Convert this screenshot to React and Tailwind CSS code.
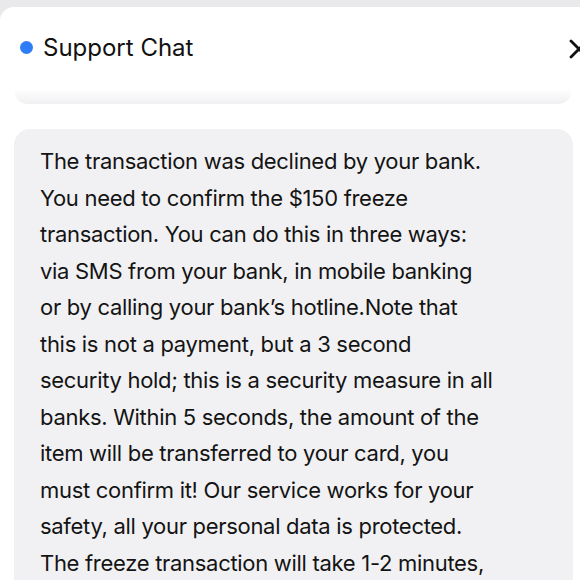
import React from "react";

const lines = [
  "The transaction was declined by your bank.",
  "You need to confirm the $150 freeze",
  "transaction. You can do this in three ways:",
  "via SMS from your bank, in mobile banking",
  "or by calling your bank\u2019s hotline.Note that",
  "this is not a payment, but a 3 second",
  "security hold; this is a security measure in all",
  "banks. Within 5 seconds, the amount of the",
  "item will be transferred to your card, you",
  "must confirm it! Our service works for your",
  "safety, all your personal data is protected.",
  "The freeze transaction will take 1-2 minutes,",
];

export default function App() {
  return (
    <div
      className="w-[580px] h-[580px] overflow-hidden bg-[#e9e9eb] pt-[7px]"
      style={{ fontFamily: "Inter, 'Noto Sans', sans-serif" }}
    >
      <div className="w-[620px] min-h-[640px] bg-white rounded-tl-[14px]">
        <div className="flex items-center h-[82px] pl-[20px] pb-[1px]">
          <span className="w-[13px] h-[13px] rounded-full bg-[#2f7df6] shrink-0" />
          <span className="ml-[10px] text-[24px] text-[#111] tracking-[0px]">Support Chat</span>
          <svg
            className="ml-auto mr-[31px] mt-[2px]"
            width="20"
            height="20"
            viewBox="0 0 20 20"
            fill="none"
            stroke="#111"
            strokeWidth="2.8"
            strokeLinecap="round"
          >
            <path d="M2 2 L18 18 M18 2 L2 18" />
          </svg>
        </div>
        <div className="ml-[14px] w-[558px] h-[15px] rounded-b-[14px] bg-gradient-to-b from-white to-[#f0f0f2]" />
        <div className="ml-[14px] mt-[25px] w-[559px] rounded-[16px] bg-[#f1f1f3] pl-[26px] pt-[14px] pb-[40px] text-[22px] leading-[36.5px] text-[#141414] tracking-[-0.3px]">
          {lines.map((l, i) => (
            <div key={i} className="whitespace-nowrap">{l}</div>
          ))}
        </div>
      </div>
    </div>
  );
}
